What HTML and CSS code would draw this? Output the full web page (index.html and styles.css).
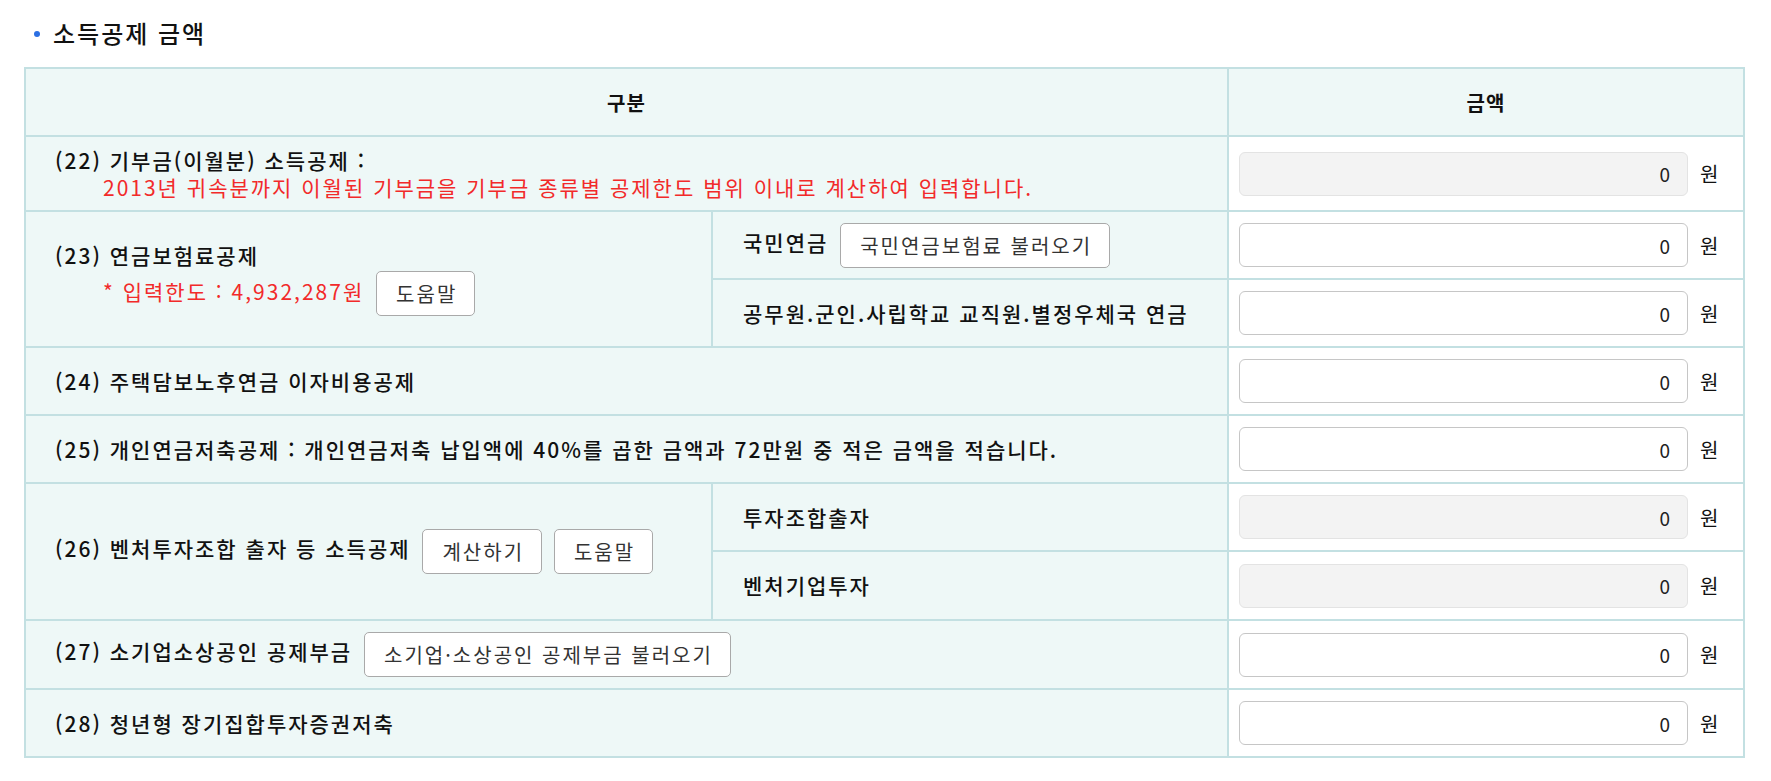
FILE: index.html
```html
<!DOCTYPE html>
<html lang="ko">
<head>
    <meta charset="utf-8">
    <title>소득공제 금액</title>
    <link rel="stylesheet" href="styles.css">
</head>
<body>
    <div class="page">
        <h3 class="section-title">소득공제 금액</h3>

        <table class="deduct-table">
            <colgroup>
                <col class="col-label">
                <col class="col-sub">
                <col class="col-amount">
            </colgroup>
            <thead>
                <tr class="row-head">
                    <th colspan="2">구분</th>
                    <th>금액</th>
                </tr>
            </thead>
            <tbody>
                <tr class="row-tall">
                    <td colspan="2" class="label">
                        <div>(22) 기부금(이월분) 소득공제 :</div>
                        <div class="note">2013년 귀속분까지 이월된 기부금을 기부금 종류별 공제한도 범위 이내로 계산하여 입력합니다.</div>
                    </td>
                    <td class="amount">
                        <div class="amount-box"><input type="text" value="0" disabled><span class="unit">원</span></div>
                    </td>
                </tr>

                <tr>
                    <td rowspan="2" class="label">
                        <div>(23) 연금보험료공제</div>
                        <div class="note note-line">* 입력한도 : 4,932,287원 <button type="button">도움말</button></div>
                    </td>
                    <td class="sub">국민연금 <button type="button">국민연금보험료 불러오기</button></td>
                    <td class="amount">
                        <div class="amount-box"><input type="text" value="0"><span class="unit">원</span></div>
                    </td>
                </tr>
                <tr>
                    <td class="sub">공무원.군인.사립학교 교직원.별정우체국 연금</td>
                    <td class="amount">
                        <div class="amount-box"><input type="text" value="0"><span class="unit">원</span></div>
                    </td>
                </tr>

                <tr>
                    <td colspan="2" class="label">(24) 주택담보노후연금 이자비용공제</td>
                    <td class="amount">
                        <div class="amount-box"><input type="text" value="0"><span class="unit">원</span></div>
                    </td>
                </tr>

                <tr>
                    <td colspan="2" class="label">(25) 개인연금저축공제 : 개인연금저축 납입액에 40%를 곱한 금액과 72만원 중 적은 금액을 적습니다.</td>
                    <td class="amount">
                        <div class="amount-box"><input type="text" value="0"><span class="unit">원</span></div>
                    </td>
                </tr>

                <tr>
                    <td rowspan="2" class="label">
                        (26) 벤처투자조합 출자 등 소득공제
                        <button type="button">계산하기</button>
                        <button type="button">도움말</button>
                    </td>
                    <td class="sub">투자조합출자</td>
                    <td class="amount">
                        <div class="amount-box"><input type="text" value="0" disabled><span class="unit">원</span></div>
                    </td>
                </tr>
                <tr class="row-69">
                    <td class="sub">벤처기업투자</td>
                    <td class="amount">
                        <div class="amount-box"><input type="text" value="0" disabled><span class="unit">원</span></div>
                    </td>
                </tr>

                <tr class="row-69">
                    <td colspan="2" class="label">(27) 소기업소상공인 공제부금 <button type="button">소기업·소상공인 공제부금 불러오기</button></td>
                    <td class="amount">
                        <div class="amount-box"><input type="text" value="0"><span class="unit">원</span></div>
                    </td>
                </tr>

                <tr>
                    <td colspan="2" class="label">(28) 청년형 장기집합투자증권저축</td>
                    <td class="amount">
                        <div class="amount-box"><input type="text" value="0"><span class="unit">원</span></div>
                    </td>
                </tr>
            </tbody>
        </table>
    </div>
</body>
</html>
```

FILE: styles.css
```css
body {
    margin: 0;
    font-family: "Noto Sans CJK KR", "Noto Sans", sans-serif;
    color: #111;
    background: #fff;
}
.page {
    padding: 13px 24px 0 24px;
}
.section-title {
    position: relative;
    margin: 0 0 14px 0;
    padding-left: 29px;
    font-size: 24px;
    font-weight: 500;
    letter-spacing: 2px;
    line-height: 40px;
    color: #111;
}
.section-title::before {
    content: "";
    position: absolute;
    left: 10px;
    top: 18px;
    width: 6px;
    height: 6px;
    border-radius: 50%;
    background: #2b6fe3; /* blue bullet */
}
.deduct-table {
    width: 1721px;
    border-collapse: collapse;
    font-size: 21px;
    letter-spacing: 2px;
    table-layout: fixed;
}
.col-label {
    width: 687px;
}
.col-sub {
    width: 516px;
}
.deduct-table th,
.deduct-table td {
    border: 2px solid #c3e0e2;
    padding: 0;
}
.deduct-table th {
    height: 66px;
    background: #eef8f7;
    font-weight: bold;
    font-size: 20px;
    letter-spacing: 1px;
}
.deduct-table tr {
    height: 68px;
}
.deduct-table tr.row-tall {
    height: 75px;
}
.deduct-table tr.row-69 {
    height: 69px;
}
.label,
.sub {
    background: #eef8f7;
    line-height: 27px;
    font-weight: 500;
}
.label {
    padding-left: 29px !important;
}
.sub {
    padding-left: 30px !important;
}
.note {
    color: #f22a2a;
    font-weight: normal;
    padding-left: 48px;
}
.note-line {
    line-height: 44px;
    margin-top: 0;
}
.amount {
    background: #fff;
    padding: 0 22px 0 10px !important;
}
.amount-box {
    display: flex;
    align-items: center;
    gap: 12px;
    letter-spacing: 0;
    font-size: 20px;
}
.amount-box input {
    flex: none;
    width: 449px;
    height: 44px;
    box-sizing: border-box;
    border: 1px solid #c6c6c6;
    border-radius: 6px;
    padding: 0 17px;
    font-family: inherit;
    font-size: 19px;
    text-align: right;
    color: #222;
    background: #fff;
}
.amount-box input:disabled {
    background: #f3f3f3;
    border-color: #e3e3e3;
    color: #222;
}
.unit {
    white-space: nowrap;
}
button {
    height: 45px;
    padding: 0 17px 0 19px;
    margin-left: 4px;
    border: 1px solid #a9a9a9;
    border-radius: 5px;
    background: #fff;
    font-family: inherit;
    font-size: 20px;
    font-weight: normal;
    letter-spacing: 2px;
    color: #333;
    vertical-align: middle;
}
```
